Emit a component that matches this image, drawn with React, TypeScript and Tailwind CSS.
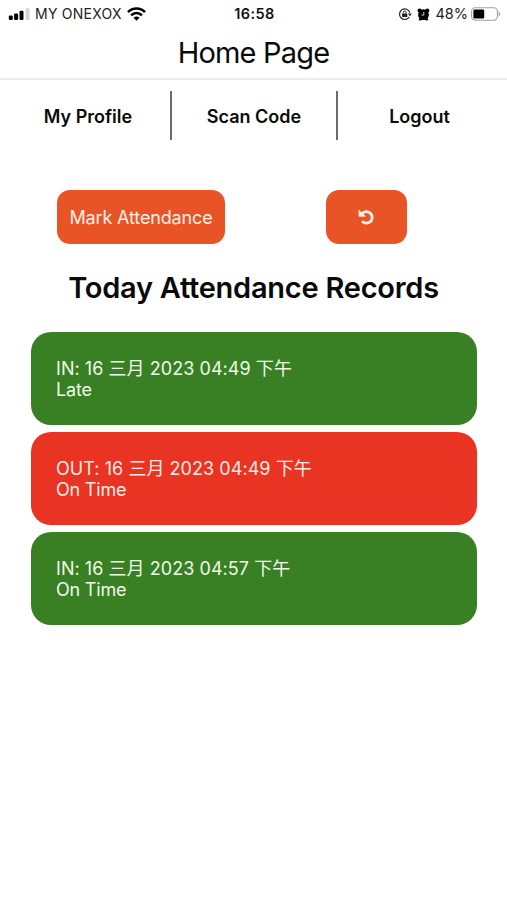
import type { ReactNode } from "react";

type AttendanceRecord = {
  type: "IN" | "OUT";
  time: string;
  status: string;
};

const tabs = ["My Profile", "Scan Code", "Logout"];

const records: AttendanceRecord[] = [
  { type: "IN", time: "16 三月 2023 04:49 下午", status: "Late" },
  { type: "OUT", time: "16 三月 2023 04:49 下午", status: "On Time" },
  { type: "IN", time: "16 三月 2023 04:57 下午", status: "On Time" },
];

function StatusBar() {
  return (
    <div className="grid h-7 grid-cols-[1fr_auto_1fr] items-center pl-2 pr-1.5 text-[14px] leading-none text-[#222]">
      <div className="flex items-center">
        <svg width="22" height="12" viewBox="0 0 22 12" fill="#000">
          <rect x="0.8" y="7.6" width="4" height="4.4" rx="1.2" />
          <rect x="6.1" y="5.6" width="4" height="6.4" rx="1.2" />
          <rect x="11.5" y="2.8" width="4" height="9.2" rx="1.2" />
          <rect x="17.6" y="0.2" width="4" height="11.8" rx="1.2" fill="#d4d4d4" />
        </svg>
        <span className="ml-[5px] tracking-[0.25px]">MY ONEXOX</span>
        <svg className="ml-[5px]" width="19" height="14" viewBox="0 0 19 14" fill="none" stroke="#000" strokeWidth="2.6">
          <path d="M1 5.1a12 12 0 0 1 17 0" />
          <path d="M4.1 8.3a7.6 7.6 0 0 1 10.8 0" />
          <path d="M9.5 13.8 6.5 10.7a4.2 4.2 0 0 1 6 0z" fill="#000" stroke="none" />
        </svg>
      </div>
      <span className="text-[14.5px] font-semibold tracking-[0.45px] text-[#111]">16:58</span>
      <div className="flex items-center justify-end">
        <svg width="14" height="14" viewBox="0 0 14 14" fill="none" stroke="#222" strokeWidth="1.2">
          <path d="M11.2 10.2A5.3 5.3 0 1 1 11.9 5.6" />
          <path d="M9.9 6.4h3.9l-1.9 2.8z" fill="#222" stroke="none" />
          <rect x="4.1" y="6.4" width="5.2" height="3.6" rx="0.6" fill="#222" stroke="none" />
          <path d="M5.3 6.6V5.4a1.4 1.4 0 0 1 2.8 0v1.2" strokeWidth="1" />
        </svg>
        <svg className="ml-[5px]" width="13" height="13" viewBox="0 0 13 13" fill="#000">
          <circle cx="6.5" cy="6.7" r="5.4" />
          <circle cx="2.7" cy="2.6" r="2.1" />
          <circle cx="10.3" cy="2.6" r="2.1" />
          <path d="m1.6 12.2 1.2-3 3 2.2-1.8 1.2zM11.4 12.2l-1.2-3-3 2.2L9 12.6z" />
          <path d="M6.8 4v3.1H4.4" fill="none" stroke="#fff" strokeWidth="0.8" />
        </svg>
        <span className="ml-[5px] text-[14.5px]">48%</span>
        <svg className="ml-[3px]" width="30" height="14" viewBox="0 0 30 14">
          <rect x="0.6" y="0.8" width="25.8" height="12.4" rx="3.6" fill="#fff" stroke="#a3a3a3" strokeWidth="1.1" />
          <rect x="2.4" y="2.6" width="10.8" height="8.8" rx="1.2" fill="#000" />
          <path d="M27.6 4.6c2.2.8 2.2 4 0 4.8z" fill="#a3a3a3" />
        </svg>
      </div>
    </div>
  );
}

function ActionButton({ className, children }: { className: string; children: ReactNode }) {
  return (
    <button
      className={`flex h-[54px] items-center justify-center rounded-[13px] bg-[#e95427] text-[#fff1e8] ${className}`}
    >
      {children}
    </button>
  );
}

function RecordCard({ record }: { record: AttendanceRecord }) {
  return (
    <li
      className={`h-[93px] rounded-[20px] pl-[25px] pt-[26px] text-[18px] leading-[21px] ${
        record.type === "IN" ? "bg-[#388023] text-[#effbe9]" : "bg-[#e93323] text-[#ffece6]"
      }`}
    >
      <p className="tracking-[0.05px]">
        {record.type}: {record.time}
      </p>
      <p className="tracking-[-0.2px]">{record.status}</p>
    </li>
  );
}

export default function App() {
  return (
    <div className="min-h-screen w-full bg-white font-['Inter','Noto_Sans_CJK_SC',sans-serif] text-[#0a0a0a]">
      <StatusBar />
      <header className="flex h-[52px] items-center justify-center border-b-2 border-[#ececec] pb-[2px]">
        <h1 className="text-[29px] leading-none tracking-[-0.8px]">Home Page</h1>
      </header>

      <nav className="mt-[11px] grid h-[49px] grid-cols-[166px_166px_1fr] divide-x-2 divide-[#6b6b6b] px-1.5">
        {tabs.map((tab) => (
          <button key={tab} className="flex items-center justify-center pt-px text-[18px] font-semibold">
            {tab}
          </button>
        ))}
      </nav>

      <div className="mt-[50px] flex justify-between pl-[57px] pr-[100px]">
        <ActionButton className="w-[168px] text-[18px] tracking-[-0.15px]">Mark Attendance</ActionButton>
        <ActionButton className="w-[81px]">
          <svg width="17" height="16" viewBox="0 0 17 16" fill="none" stroke="currentColor" strokeWidth="2.8">
            <path d="M4.4 4.2A5.8 5.8 0 1 1 4 12.2" />
            <path d="M1 1.2v6h6.2z" fill="currentColor" strokeWidth="0.8" strokeLinejoin="round" />
          </svg>
        </ActionButton>
      </div>

      <h2 className="mt-[26px] text-center text-[29px] font-semibold leading-9 tracking-[-0.25px]">
        Today Attendance Records
      </h2>

      <ul className="mt-[26px] flex flex-col gap-[7px] pl-[31px] pr-[30px]">
        {records.map((record, i) => (
          <RecordCard key={i} record={record} />
        ))}
      </ul>
    </div>
  );
}
